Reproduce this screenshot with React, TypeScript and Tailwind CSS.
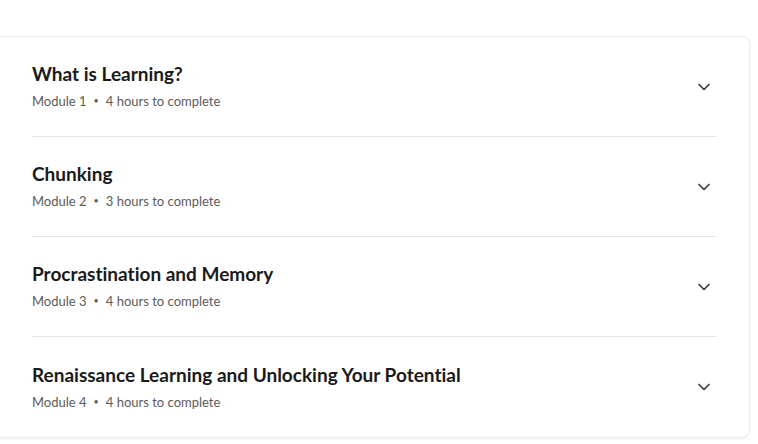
import { ChevronDown } from "lucide-react";

const modules = [
  { title: "What is Learning?", module: 1, hours: 4 },
  { title: "Chunking", module: 2, hours: 3 },
  { title: "Procrastination and Memory", module: 3, hours: 4 },
  { title: "Renaissance Learning and Unlocking Your Potential", module: 4, hours: 4 },
];

function ModuleRow({ title, module, hours, last }: { title: string; module: number; hours: number; last: boolean }) {
  return (
    <div className={`ml-[31px] mr-8 flex h-[100px] items-center justify-between ${last ? "" : "border-b border-[#e5e7eb]"}`}>
      <div className="flex flex-col">
        <h3 className="text-[19px] font-bold leading-6 text-[#1a1a1a] [font-variant-ligatures:none]">{title}</h3>
        <p className="mt-[5px] flex items-center text-[13px] leading-5 text-[#5b5b5b]">
          <span>Module {module}</span>
          <span className="mx-[7px] text-[9px]">•</span>
          <span>{hours} hours to complete</span>
        </p>
      </div>
      <button className="-mr-[5px] flex h-9 w-9 items-center justify-center rounded-full text-[#3a3a3a]">
        <ChevronDown className="h-5 w-5" strokeWidth={2} />
      </button>
    </div>
  );
}

export default function App() {
  return (
    <div className="h-[444px] w-[758px] bg-white pt-9" style={{ fontFamily: "Lato, 'Noto Sans', sans-serif" }}>
      <div className="-ml-2 w-[758px] rounded-lg border border-[#ececec] bg-white pl-2 shadow-[0_1px_3px_rgba(0,0,0,0.06)]">
        {modules.map((m, i) => (
          <ModuleRow key={m.module} {...m} last={i === modules.length - 1} />
        ))}
      </div>
    </div>
  );
}
